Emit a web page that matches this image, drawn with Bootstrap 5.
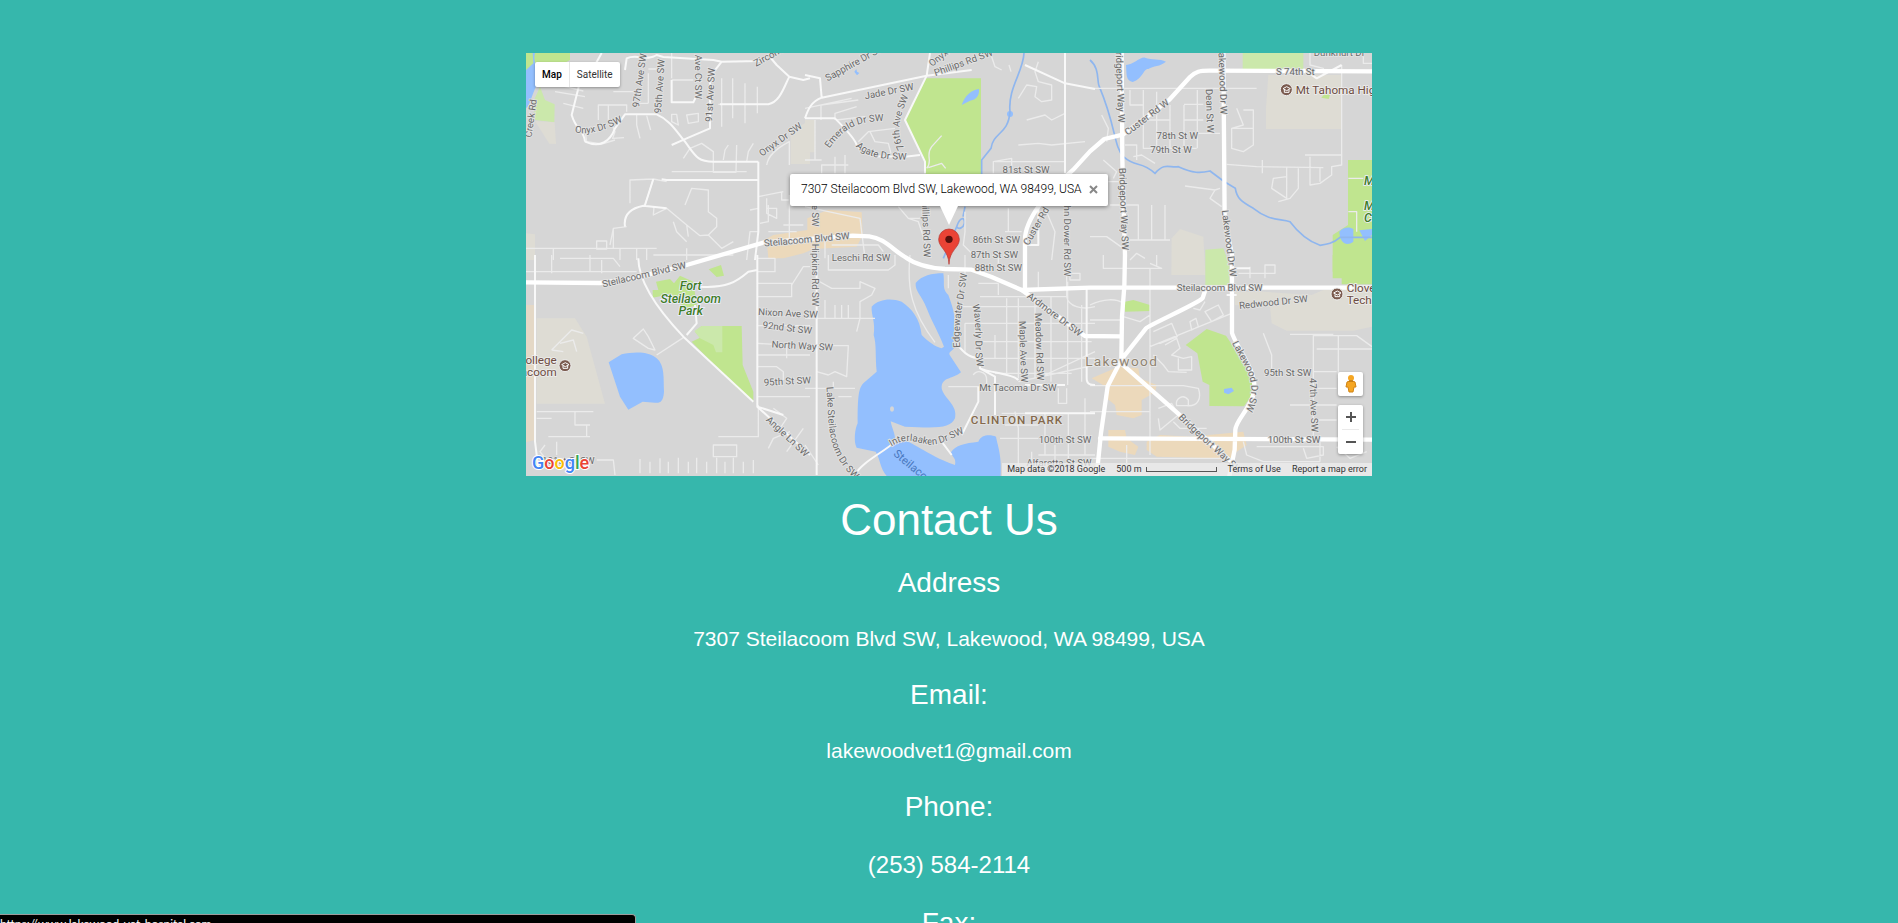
<!DOCTYPE html>
<html lang="en">
<head>
<meta charset="utf-8">
<meta name="viewport" content="width=device-width, initial-scale=1">
<title>Contact Us</title>
<link href="https://cdn.jsdelivr.net/npm/bootstrap@5.3.0/dist/css/bootstrap.min.css" rel="stylesheet">
<script src="https://cdn.jsdelivr.net/npm/bootstrap@5.3.0/dist/js/bootstrap.bundle.min.js" defer></script>
<style>
body{background:#36b7ac;color:#fff;font-family:"Liberation Sans",Arial,sans-serif;overflow-x:hidden}
.contact-wrap{max-width:846px;padding-top:53px}
.map-box{font-family:Roboto,sans-serif;color:#000}
.map-box svg{display:block}
.map-art{width:100%;height:auto;background:#d6d6d6}
.contact-title{font-size:44px;line-height:48px;margin:20px 0 23px;font-weight:400}
.contact-list{gap:28px}
.contact-list dt{font-size:28px;line-height:32px;font-weight:400}
.contact-list dd{font-size:21px;line-height:24px;margin:0}
.contact-list .phone-line{font-size:24px;line-height:28px}
.contact-list a{color:#fff;text-decoration:none}
.map-ctl{background:#fff;border-radius:2px;box-shadow:0 1px 3px rgba(0,0,0,.35)}
.map-ctl button{border:0;background:none;padding:0;color:#000}
.type-ctl{left:9px;top:9px;height:25px;font-size:10px}
.type-ctl button{padding:0 7px;color:#333}
.type-ctl button:first-child{font-weight:500;color:#000;border-right:1px solid #e6e6e6}
.right-ctl{right:9px;bottom:22px;gap:9px}
.right-ctl .map-ctl{width:25px}
.right-ctl button{height:24px;display:grid;place-items:center;width:100%}
.zoom-ctl hr{margin:0 4px;border-color:#aaa}
.info-win{left:50%;bottom:270px;transform:translateX(-50%);width:318px;height:32px;background:#fff;border-radius:2px;box-shadow:0 1px 4px rgba(0,0,0,.45);font-size:12px;font-weight:300;line-height:16px;padding:0 10px 2px 11px}
.info-win::after{content:"";position:absolute;left:50%;top:100%;margin-left:-9px;border:solid transparent;border-width:19px 9px 0;border-top-color:#fff}
.info-win button{border:0;background:none;padding:0;line-height:0}
.map-foot{right:0;bottom:0;height:13px;background:rgba(238,238,238,.75);font-size:9px;line-height:13px;color:#333;padding:0 5px;gap:11px}
.map-foot a{color:#333;text-decoration:none}
.scale-bar{width:71px;height:5px;border:solid #555;border-width:0 1px 1px}
.status-bar{width:636px;max-width:100%;height:9px;background:#000;border-top:1px solid #9c9c9c;border-right:1px solid #9c9c9c;border-top-right-radius:4px;font-family:Lato,sans-serif;font-size:12px;line-height:18px}
.beige{fill:#dedcd4}.peach{fill:#ecd9bb}.park{fill:#c0e58f}.park2{fill:#cbe8ab}.water{fill:#93bffe}
.creek{fill:none;stroke:#8fb6ee;stroke-width:5}
.lane{fill:none;stroke:#ebebeb;stroke-width:4;stroke-linejoin:round}
.street{fill:none;stroke:#f8f8f8;stroke-width:6;stroke-linejoin:round}
.mainroad{fill:none;stroke:#fff;stroke-width:13;stroke-linejoin:round;stroke-linecap:round}
.labels text{font-size:29px;fill:#6a6a6a;stroke:#e3e3e3;stroke-width:5;paint-order:stroke;text-anchor:middle;dominant-baseline:central}
.labels .curved{dominant-baseline:auto}
.labels .poi{fill:#6d4c41;font-size:35px;text-anchor:start;font-weight:400;stroke:#eee}
.labels .green{fill:#3f7d25;font-style:italic;font-size:37px;font-weight:500;stroke:#eef}
.labels .town{fill:#8f8371;font-size:41px;letter-spacing:4px;stroke:#e8e8e8}
.labels .hood{fill:#84694c;font-size:35px;letter-spacing:3px;font-weight:500}
.labels .lake{fill:#4a79c0;stroke:none;font-size:34px}
.labels .logo{font-size:54px;font-weight:500;stroke:#fff;stroke-width:6;text-anchor:start;dominant-baseline:auto}
</style>
</head>
<body>
<main class="contact-wrap container-fluid px-0 text-center">
<div class="map-box position-relative text-start">
<svg class="map-art" viewBox="0 0 2538 1269" role="img" aria-label="Map of Lakewood">
<defs>
<path id="c1" d="M164,262 C200,268 240,265 315,226"/>
<path id="c2" d="M726,335 L852,245"/>
<path id="c3" d="M70,314 C110,262 140,228 240,228"/>
<path id="c4" d="M148,300 C180,334 220,345 310,344"/>
<path id="c5" d="M300,312 C268,265 285,215 312,150"/>
<path id="c6" d="M64,392 C74,500 56,590 154,676"/>
<path id="c7" d="M256,576 C320,536 345,575 390,568 C420,562 440,550 480,533"/>
<path id="c8" d="M420,248 C450,330 520,370 460,482"/>
<path id="c9" d="M466,280 C458,200 474,150 487,54"/>
<path id="c10" d="M500,146 C520,210 504,270 517,340"/>
<path id="c11" d="M258,482 C310,540 360,570 450,665"/>
</defs>
<!-- land use, parks and water -->
<g transform="translate(-18 -24)">
<path class="park" d="M18,24H150V45L85,80L60,60L18,90Z"/><path class="water" d="M45,24C35,60 70,80 48,125C35,150 30,180 18,190V75L40,55L38,24Z"/><path class="park2" d="M60,125L75,165L104,178L103,232L45,225L40,170Z"/><path class="beige" d="M45,228L104,232L108,297L88,296Z"/>
<path class="beige" d="M870,225V357H812V260Z"/><path class="beige" d="M18,565L45,568V645H18Z"/>
<path class="peach" d="M725,590L760,570L862,555V520L925,494L1025,502L1028,570L1010,605L880,612L850,625L790,640H745L742,605Z"/></g>
<g transform="translate(837 -24)">
<path class="beige" d="M0,225H30V322H0Z"/><path class="park" d="M360,100H528V390H362V350L300,225Z"/>
<path class="water" d="M470,180C480,150 500,135 522,132C524,155 510,165 495,167ZM148,80l6,-8 2,8 7,4 -7,7Z"/><circle class="water" cx="615" cy="207" r="9"/>
<path class="creek" d="M657,24C655,80 608,130 615,200C610,270 565,260 558,310L530,345V390M480,485L474,515M455,545C465,515 480,515 478,535C475,548 462,555 455,545L415,640"/></g>
<g transform="translate(1692 -24)">
<path class="park2" d="M458,24H640V72H458Z"/><path class="beige" d="M535,90H755V252H528V190Z"/><path class="park" d="M774,345H846V700H728V570L774,540Z"/><path class="park" d="M694,158l10,-12 16,4 -4,12Z"/>
<path class="beige" d="M245,580L270,552L340,575L346,690H244Z"/><path class="park2" d="M346,614L400,610L418,660V720H346Z"/>
<path class="water" d="M108,60C130,60 150,35 165,38C185,45 210,40 228,50C210,65 190,62 175,72C160,70 160,100 128,111C108,105 110,95 108,60ZM748,560C760,545 780,545 790,552V590C770,605 750,595 748,560ZM808,556L846,552V570L825,588Z"/>
<path class="creek" d="M0,45C30,70 20,110 28,125C80,250 70,300 100,335C140,370 150,345 195,385C225,350 240,370 265,365C310,385 330,385 360,378L400,408L436,430C440,460 455,470 490,490C540,530 570,520 600,530C630,570 660,590 690,601C710,598 730,595 750,577H846"/></g>
<g transform="translate(-18 606)">
<path class="peach" opacity=".6" d="M18,150H46V555L18,562Z"/><path class="beige" d="M50,190L165,190L200,245L255,446H50Z"/>
<path class="water" d="M266,322L305,298C345,288 390,290 410,310C435,330 430,370 432,410C430,440 420,445 405,443L368,440L325,464L300,425Z"/>
<path class="park" d="M515,260L540,248L525,230L545,213H665L668,330L700,410V440L650,398Z"/><path class="park2" d="M523,228L545,213H607V292H588L580,270L540,250Z"/><path class="park" d="M566,43L603,30L612,62L590,66ZM408,80L450,72L462,85L480,62L520,80L530,150L500,160L440,120L398,128V105H415Z"/><path class="peach" d="M750,0H790L765,12Z"/></g>
<g transform="translate(837 606)">
<path class="water" d="M332,84C350,62 380,55 415,55C420,90 410,100 430,120C445,160 450,180 447,205C450,240 440,260 450,275C440,290 430,290 434,300L468,352C440,375 410,365 410,400C415,430 460,450 450,490C435,520 400,520 300,515L257,499C260,520 272,535 270,560C310,540 340,590 450,630C455,610 440,605 438,592C450,570 480,565 520,560C530,535 560,540 573,545C580,580 590,600 587,663H245C225,640 225,610 212,590L155,578C145,560 150,520 158,505C158,430 160,400 175,385L215,350C210,300 215,270 206,240C212,200 198,180 200,155C225,130 260,130 290,140C320,160 345,190 350,240C370,260 390,275 410,280L417,275C400,230 380,200 365,160C350,120 330,110 332,84Z"/><ellipse cx="261" cy="462" rx="6" ry="8" fill="#d6d6d6"/></g>
<g transform="translate(1692 606)">
<path class="park" d="M728,0H846V88H755V50H728ZM105,140L130,135L180,150V168L105,170ZM287,270L350,222L408,242L430,275L480,340L500,400L462,454L358,453V390L338,380L322,295Z"/><path class="water" d="M402,402L425,398L432,408L415,418L402,413Z"/>
<path class="beige" d="M435,110H520L665,120L700,105L846,100V215L790,227H590L545,205L540,155L435,150Z"/>
<path class="peach" d="M5,370L85,335L145,340L150,370L200,390L195,412L155,435V480L130,490L80,480L75,450L50,430L55,400ZM55,525L105,525L110,550L145,575L135,600L90,590L55,575ZM170,560L210,540L300,545L460,530L470,570L440,590L420,620L370,610L200,605L170,585Z"/></g>
<!-- residential lanes -->
<g class="lane">
<g transform="translate(-18 -24)"><path d="M105,140L195,155M130,175L190,190M110,118L190,138M235,225V180H320V200M265,180V225M280,140H350M385,85V175M385,72H420M355,175H385M350,210V240L360,280M380,212L392,255M270,225L285,260L278,280L312,278M195,255L200,290L245,297L285,285M455,100V24M455,105H520M605,100V245M638,100V220M675,115V235M712,125V205M595,178H740M455,208H470L475,240L455,230ZM500,210L535,205V230L505,235ZM490,340L510,310L545,295L580,320V382H648L650,300M610,345L615,315L625,300M680,350L685,320L700,295M455,380H680M715,455L790,440M330,475V405L400,402M375,480L400,402L440,410M495,480L515,430L565,435V500L590,520V545L565,570L540,572L500,540L440,490M440,490L400,510L402,485M460,530L470,560L500,590M505,575L500,540M565,570L605,610L640,590M270,600L280,550L320,545M230,588H260V612H230ZM18,610H410M350,610V645M380,610V645M100,610V645M300,610V645M280,550V610M740,460V505L770,520V490H740M690,495L715,490M720,535L745,530V480M740,360C745,330 770,310 808,290V360M785,440V465H808M790,540H850M745,560H830M808,450V600M715,560H690L680,645M400,630H640M500,610V645"/></g>
<g transform="translate(837 -24)"><path d="M0,190L140,160M48,225V180L160,165M90,225V205L155,185M95,225L180,215M160,290L190,260L270,250M195,260L210,290L250,295L258,325M130,360L50,360V385M50,345H0M120,330V385M90,335V385M30,225V345M365,370C385,350 360,330 380,305L410,272M370,368L410,355L422,370M640,160L665,120L695,125L690,155L710,170L740,165V120L700,110L690,80L700,50M560,35L570,65L590,75M612,60L618,80M665,225L720,210L740,225L780,205M640,300L700,295L740,300L840,290M565,385V350L620,340V370M570,350H780M610,490V560M720,490L750,560L740,645M600,560H650M480,500L480,560L475,600L500,625M280,485L310,520L340,530L360,590M310,520H350M0,485L165,520L180,640M80,600H220L235,620M120,560L60,590V640"/></g>
<g transform="translate(1692 -24)"><path d="M0,130H500M120,135V180H160M160,135V310H320M200,140V310M240,180V310M282,180V310M282,178H340M322,135V310M120,180M160,225H240M282,225H340M322,265H390M440,190L460,240L425,250V310L460,320L490,300V195H460M425,250H488M410,358L500,365L700,368M660,24V60L700,70V90M755,60V360L725,365V390L690,415L660,420V335M690,368V410M645,330H755M517,345V385M590,365V460L545,430L550,400L590,395M625,370V430L600,460L565,470M285,423L375,435L390,430M375,435L360,460L395,485M130,335L155,330L195,355M105,300H140V345M35,210L55,250L50,290M40,345L80,380L70,400M55,410H90M60,480H145V585M185,480V585M225,480V585M100,585H240M0,575H50L100,610M120,645L140,625L165,640M775,400H820M775,500H800V560M820,24V55H846"/></g>
<g transform="translate(-18 606)"><path d="M18,50H350M95,0V55M120,10H280L300,35M210,0V50M245,15V55M95,285L155,225L190,235M95,285L130,290M120,265L160,255L170,290M340,250L370,222L385,245L405,285L385,280ZM410,300L490,248M50,470H220M85,545L210,545M50,490H95M200,510V545M165,470V510H210M75,570L60,590L100,640M230,615H280L285,660M110,560V600M595,545H715V450M580,570H650V605H580ZM360,612V655M390,620V655M420,610V655M445,620V655M475,608V655M505,620V655M530,608V655M560,620V655M590,608V655M615,620V655M640,608V655M670,620V655M700,615V655M712,50H765V10H712M712,125H815V85H712M815,90L850,35H870M712,212H870M712,265L800,270V310M712,335H770L790,350V375M712,300H870M712,425H870M760,460L800,490L780,520M800,590L850,520M745,580L760,550L810,530"/></g>
<g transform="translate(837 606)"><path d="M70,0V45H250L270,30V0M35,75L80,100H165V80L210,100L200,120L165,140V190L155,230M0,190H210M60,135V190M90,150V190M110,150V190M130,150V190M0,272H130L125,365L90,350L70,360L35,350M0,400H150M85,380V400M100,425H140M315,0C305,100 320,170 390,262M430,60V100M470,65V95M480,0V80M580,85V120M520,85H580M605,130V360M640,130V370M690,125V370M738,125V380M788,80V390M830,150V380M470,155H730M480,205H870M510,260H860M520,310H870M570,355H800M640,380L870,330M720,360L870,290M480,205V290M570,240V310M525,125H785V60M785,125C790,155 830,165 870,155M795,55H825V75H795ZM700,50V100M580,50V0M505,360C510,345 545,345 545,375V390M630,470L640,520V660M760,400V445H785V400M840,430V600M590,475H870M600,510H700M720,475V600M790,475V620M585,550H700M680,590V640M750,570V620M700,600H870M430,395H530M0,570L40,630"/></g>
<g transform="translate(1692 606)"><path d="M40,0V40H215L180,25M180,40V600M0,195H90M0,150C40,130 80,130 100,145M100,185L150,200L180,180M190,230L245,205L262,245L210,265M225,270L260,250L270,280L245,300L280,310L305,305V345H265V310M300,200L318,190L325,215L305,225ZM345,170L385,150L400,180L365,200ZM310,160L330,165L345,140M180,275L425,175M0,392H280L325,400C335,430 325,455 290,452H260C255,430 280,415 295,435V450M0,470H180M205,460L245,445L265,480L240,500L210,525L205,490M250,500L270,520H350M0,610H420M110,570V625M460,560L470,600L520,620H690M500,575H700V600L650,610L640,580M690,560V620M740,575L780,610L830,590M520,235L545,300V345M670,240V550M745,240V370M670,350H740M670,242H800L846,275M680,282H846M600,238H730M600,450H740M670,400H740M670,495H740M445,55H555V30H525V70M480,35V70M190,300L220,330L235,350L290,352M200,0V35"/></g>
</g>
<!-- collector streets -->
<g class="street">
<g transform="translate(-18 -24)"><path d="M185,90L155,210C170,260 190,250 195,290M225,60L245,24M195,290C240,310 270,290 285,250L315,208H410C450,225 470,260 495,290C525,330 530,350 580,350H715M315,75L320,40C350,25 380,50 410,30L430,36L580,45L605,50L720,48L745,30M745,30L770,60L808,95L850,105L870,100M808,95C790,130 780,170 745,178H600M605,50L570,95V250L500,280L455,300M715,350V560L705,645M715,405H440L425,403M375,480L400,402M315,545C310,510 330,490 370,482L440,490M455,105V172H520L540,130"/></g>
<g transform="translate(837 -24)"><path d="M0,220C10,190 20,170 50,158L365,92L500,75M50,158L45,100L0,90M0,220H90C110,240 150,280 155,300M365,92L300,225L360,350V385M365,92L375,24M155,300C190,350 240,330 300,335L345,330M780,24V385M660,60L780,115L870,132M665,600H700V485"/></g>
<g transform="translate(1692 -24)"><path d="M640,72L680,100L755,60"/></g>
<g transform="translate(-18 606)"><path d="M45,0V560L55,640M355,10C355,70 400,150 490,245L700,440M500,240L530,205L525,150M540,95C620,100 650,80 685,50L712,45M712,0V455L870,600M712,455L790,480"/></g>
<g transform="translate(837 606)"><path d="M35,0V660M150,660C170,620 240,590 270,560M470,540L520,440V395M455,265C480,300 500,310 525,310V340L570,365V480M410,560L440,600M660,475H870M525,340C560,355 620,355 640,375M845,100V370C845,390 860,390 870,390M780,390H660"/></g>
<g transform="translate(1692 606)"><path d="M425,40H480M100,545M410,120H440"/></g>
</g>
<!-- arterial roads -->
<g class="mainroad">
<path d="M0,688L222,690L320,676L482,636L715,568L980,548L1030,550C1075,556 1100,590 1137,612C1170,636 1207,645 1257,648L1337,650L1397,672L1487,711L1692,704H2538"/>
<path d="M1487,711L1677,849L1784,850M1497,711V560C1497,500 1560,420 1642,350L1692,295L1735,258L1790,245L1930,140L1992,72C2010,55 2020,53 2050,53L2538,55"/>
<path d="M1787,0L1789,320L1797,606L1795,700L1788,790L1786,920L1745,1000L1725,1140L1712,1269M1790,935L1960,1085L2120,1230M1786,920L1860,826C1870,815 2020,750 2030,735L2040,705"/>
<path d="M2092,0L2096,500L2118,606V840C2130,880 2190,950 2185,1010C2180,1060 2130,1100 2128,1130L2126,1190L2110,1269M1722,1156L2538,1160"/>
</g>
<!-- labels -->
<g class="labels">
<g transform="translate(-18 -24)">
<text class="curved" style="text-anchor:start"><textPath href="#c1">Onyx Dr SW</textPath></text><text class="curved" style="text-anchor:start"><textPath href="#c2">Onyx Dr SW</textPath></text>
<text transform="translate(358 106) rotate(-82)">97th Ave SW</text><text transform="translate(418 124) rotate(-86)">95th Ave SW</text><text transform="translate(534 72) rotate(90)">1st Ave Ct SW</text><text transform="translate(570 150) rotate(-87)">91st Ave SW</text><text transform="translate(755 28) rotate(-28)">Zircon Dr</text><text transform="translate(32 220) rotate(-82)">Creek Rd</text></g>
<g transform="translate(837 -24)">
<text transform="translate(150 52) rotate(-29)">Sapphire Dr SW</text><text transform="translate(410 30) rotate(-38)">Onyx D</text><text transform="translate(475 52) rotate(-20)">Phillips Rd SW</text><text transform="translate(252 138) rotate(-11)">Jade Dr SW</text>
<text class="curved"><textPath href="#c3" startOffset="50%">Emerald Dr SW</textPath></text><text class="curved"><textPath href="#c4" startOffset="50%">Agate Dr SW</textPath></text><text class="curved"><textPath href="#c5" startOffset="50%">76th Ave SW</textPath></text>
<text transform="translate(663 374)">81st St SW</text><text transform="translate(574 584)">86th St SW</text><text transform="translate(568 627)">87th St SW</text><text transform="translate(580 668)">88th St SW</text>
<text transform="translate(693 543) rotate(-60)">Custer Rd</text><text transform="translate(786 572) rotate(90)">John Dower Rd SW</text><text transform="translate(364 545) rotate(88)">Phillips Rd SW</text><text transform="translate(30 505) rotate(90)">ve SW</text><text transform="translate(30 690) rotate(90)">Hipkins Rd SW</text><text transform="translate(5 583) rotate(-5)">Steilacoom Blvd SW</text><text transform="translate(168 636)">Leschi Rd SW</text></g>
<g transform="translate(1692 -24)">
<text transform="translate(91 118) rotate(88)">Bridgeport Way W</text><text transform="translate(102 492) rotate(88)">Bridgeport Way SW</text><text transform="translate(399 108) rotate(88)">Lakewood Dr W</text><text transform="translate(418 595) rotate(83)">Lakewood Dr W</text><text transform="translate(360 198) rotate(88)">Dean St W</text><text transform="translate(170 216) rotate(-37)">Custer Rd W</text><text transform="translate(262 270)">78th St W</text><text transform="translate(243 313)">79th St W</text><text transform="translate(616 79)">S 74th St</text><text transform="translate(748 21)">Dunkhurt Dr</text>
<text class="poi" x="617" y="134">Mt Tahoma High</text><text class="green" style="text-anchor:start" x="822" y="408">Mea</text><text class="green" style="text-anchor:start" x="822" y="483">Mea</text><text class="green" style="text-anchor:start" x="822" y="520">Cou</text></g>
<g transform="translate(-18 606)">
<text transform="translate(372 58) rotate(-13)">Steilacoom Blvd SW</text><text class="green" x="512" y="94">Fort</text><text class="green" x="512" y="132">Steilacoom</text><text class="green" x="512" y="169">Park</text>
<text transform="translate(804 174) rotate(3)">Nixon Ave SW</text><text transform="translate(802 218) rotate(7)">92nd St SW</text><text transform="translate(847 272) rotate(3)">North Way SW</text><text transform="translate(802 378) rotate(-3)">95th St SW</text><text transform="translate(803 544) rotate(43)">Angle Ln SW</text>
<text class="poi" style="text-anchor:end" x="110" y="315">College</text><text class="poi" style="text-anchor:end" x="110" y="352">Steilacoom</text><text x="145" y="616">101st St SW</text>
<text class="logo" x="36" y="643"><tspan fill="#4285f4">G</tspan><tspan fill="#ea4335">o</tspan><tspan fill="#fbbc05">o</tspan><tspan fill="#4285f4">g</tspan><tspan fill="#34a853">l</tspan><tspan fill="#ea4335">e</tspan></text></g>
<g transform="translate(837 606)">
<text class="curved"><textPath href="#c6" startOffset="50%">Lake Steilacoom Dr SW</textPath></text><text class="curved"><textPath href="#c7" startOffset="50%">Interlaaken Dr SW</textPath></text><text class="curved"><textPath href="#c9" startOffset="50%">Edgewater Dr SW</textPath></text><text class="curved"><textPath href="#c10" startOffset="50%">Waverly Dr SW</textPath></text>
<text transform="translate(656 290) rotate(88)">Maple Ave SW</text><text transform="translate(704 275) rotate(88)">Meadow Rd SW</text><text transform="translate(750 178) rotate(37)">Ardmore Dr SW</text><text x="639" y="398">Mt Tacoma Dr SW</text><text class="hood" x="636" y="496">CLINTON PARK</text><text x="780" y="552">100th St SW</text><text x="762" y="621">Alfaretta St SW</text><text class="lake" transform="translate(336 645) rotate(40)">Steilacoom</text></g>
<g transform="translate(1692 606)">
<text class="town" x="95" y="319">Lakewood</text><text x="389" y="97">Steilacoom Blvd SW</text><text transform="translate(550 141) rotate(-6)">Redwood Dr SW</text><text x="593" y="352">95th St SW</text><text x="612" y="553">100th St SW</text><text transform="translate(672 450) rotate(88)">47th Ave SW</text><text class="curved"><textPath href="#c8" startOffset="50%">Lakewood Dr SW</textPath></text><text class="curved"><textPath href="#c11" startOffset="50%">Bridgeport Way SW</textPath></text>
<text class="poi" x="770" y="98">Clover</text><text class="poi" x="770" y="134">Technical</text></g>
<!-- school badges -->
<g fill="#7b5b4f" stroke="#eee" stroke-width="3"><circle cx="2281" cy="110" r="18"/><circle cx="117" cy="938" r="18"/><circle cx="2433" cy="723" r="18"/></g>
<g fill="none" stroke="#fff" stroke-width="3"><path id="cap" d="M2271,107L2282,101L2293,107L2282,113ZM2275,111V118H2289V111"/><use href="#cap" x="-2164" y="828"/><use href="#cap" x="152" y="613"/></g>
</g>
<!-- place marker -->
<path d="M1269,634C1268,592 1238,584 1238,559A31,31 0 0 1 1300,559C1300,584 1270,592 1269,634Z" fill="#ea4335" stroke="#b3302a" stroke-width="2"/><circle cx="1269" cy="559" r="11" fill="#57100c"/>
</svg>

<div class="map-ctl type-ctl position-absolute d-flex"><button type="button">Map</button><button type="button">Satellite</button></div>

<div class="info-win position-absolute d-flex align-items-center justify-content-between text-nowrap"><span>7307 Steilacoom Blvd SW, Lakewood, WA 98499, USA</span><button type="button" aria-label="Close"><svg width="9" height="9" viewBox="0 0 9 9"><path d="M1 1L8 8M8 1L1 8" stroke="#888" stroke-width="2"/></svg></button></div>

<div class="right-ctl position-absolute d-flex flex-column">
<div class="map-ctl"><button type="button" aria-label="Street View"><svg width="12" height="18" viewBox="0 0 12 18"><path d="M2 7Q6 4 10 7L11 12L9 12L8 17H4L3 12L1 12Z" fill="#f5a623" stroke="#d18414" stroke-width="1"/><circle cx="6" cy="3" r="3" fill="#f5a623"/><path d="M4 6H8" stroke="#a8650c" stroke-width="1"/></svg></button></div>
<div class="map-ctl zoom-ctl"><button type="button" aria-label="Zoom in"><svg width="10" height="10" viewBox="0 0 10 10"><path d="M5 0V10M0 5H10" stroke="#555" stroke-width="2"/></svg></button><hr><button type="button" aria-label="Zoom out"><svg width="10" height="10" viewBox="0 0 10 10"><path d="M0 5H10" stroke="#555" stroke-width="2"/></svg></button></div>
</div>

<div class="map-foot position-absolute d-flex align-items-center text-nowrap"><span>Map data ©2018 Google</span><span class="d-flex align-items-center gap-1">500 m <span class="scale-bar"></span></span><a href="#">Terms of Use</a><a href="#">Report a map error</a></div>
</div>

<h1 class="contact-title">Contact Us</h1>
<dl class="contact-list d-flex flex-column mb-4">
<dt>Address</dt><dd>7307 Steilacoom Blvd SW, Lakewood, WA 98499, USA</dd>
<dt>Email:</dt><dd><a href="mailto:lakewoodvet1@gmail.com">lakewoodvet1@gmail.com</a></dd>
<dt>Phone:</dt><dd class="phone-line">(253) 584-2114</dd>
<dt>Fax:</dt>
</dl>
</main>
<div class="status-bar position-fixed bottom-0 start-0 overflow-hidden">https://www.lakewood-vet-hospital.com</div>
</body>
</html>
